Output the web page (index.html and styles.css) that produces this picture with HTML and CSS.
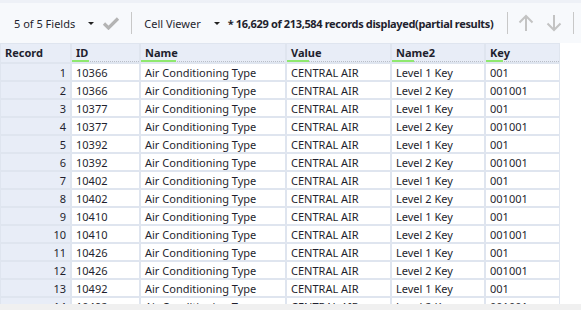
FILE: index.html
```html
<!DOCTYPE html>
<html>
<head>
<meta charset="utf-8">
<link rel="stylesheet" href="styles.css">
</head>
<body>
<div class="toolbar">
  <div class="tb-item">5 of 5 Fields<span class="caret"></span></div>
  <svg class="check" width="18" height="14" viewBox="0 0 18 14"><path d="M2 7.5 L6.5 12 L16 2.5" fill="none" stroke="#b4b4b4" stroke-width="3.2" stroke-linejoin="miter"/></svg>
  <div class="sep"></div>
  <div class="tb-item">Cell Viewer<span class="caret"></span></div>
  <div class="status">* 16,629 of 213,584 records displayed(partial results)</div>
  <div class="sep sep2"></div>
  <svg class="arrow" width="16" height="18" viewBox="0 0 16 18"><path d="M8 17 V2 M1.5 8.5 L8 2 L14.5 8.5" fill="none" stroke="#c3c3c3" stroke-width="2"/></svg>
  <svg class="arrow" width="16" height="18" viewBox="0 0 16 18"><path d="M8 1 V16 M1.5 9.5 L8 16 L14.5 9.5" fill="none" stroke="#c3c3c3" stroke-width="2"/></svg>
  <div class="sep sep3"></div>
</div>
<div class="grid">
  <div class="hd rec">Record</div>
  <div class="hd"><span class="lbl">ID</span><span class="ul" style="width:17px"></span></div>
  <div class="hd"><span class="lbl">Name</span><span class="ul" style="width:35px"></span></div>
  <div class="hd"><span class="lbl">Value</span><span class="ul" style="width:22px"></span></div>
  <div class="hd"><span class="lbl">Name2</span><span class="ul" style="width:22px"></span></div>
  <div class="hd"><span class="lbl">Key</span><span class="ul" style="width:17px"></span></div>

  <div class="num">1</div><div class="c">10366</div><div class="c">Air Conditioning Type</div><div class="c">CENTRAL AIR</div><div class="c">Level 1 Key</div><div class="c">001</div>
  <div class="num">2</div><div class="c">10366</div><div class="c">Air Conditioning Type</div><div class="c">CENTRAL AIR</div><div class="c">Level 2 Key</div><div class="c">001001</div>
  <div class="num">3</div><div class="c">10377</div><div class="c">Air Conditioning Type</div><div class="c">CENTRAL AIR</div><div class="c">Level 1 Key</div><div class="c">001</div>
  <div class="num">4</div><div class="c">10377</div><div class="c">Air Conditioning Type</div><div class="c">CENTRAL AIR</div><div class="c">Level 2 Key</div><div class="c">001001</div>
  <div class="num">5</div><div class="c">10392</div><div class="c">Air Conditioning Type</div><div class="c">CENTRAL AIR</div><div class="c">Level 1 Key</div><div class="c">001</div>
  <div class="num">6</div><div class="c">10392</div><div class="c">Air Conditioning Type</div><div class="c">CENTRAL AIR</div><div class="c">Level 2 Key</div><div class="c">001001</div>
  <div class="num">7</div><div class="c">10402</div><div class="c">Air Conditioning Type</div><div class="c">CENTRAL AIR</div><div class="c">Level 1 Key</div><div class="c">001</div>
  <div class="num">8</div><div class="c">10402</div><div class="c">Air Conditioning Type</div><div class="c">CENTRAL AIR</div><div class="c">Level 2 Key</div><div class="c">001001</div>
  <div class="num">9</div><div class="c">10410</div><div class="c">Air Conditioning Type</div><div class="c">CENTRAL AIR</div><div class="c">Level 1 Key</div><div class="c">001</div>
  <div class="num">10</div><div class="c">10410</div><div class="c">Air Conditioning Type</div><div class="c">CENTRAL AIR</div><div class="c">Level 2 Key</div><div class="c">001001</div>
  <div class="num">11</div><div class="c">10426</div><div class="c">Air Conditioning Type</div><div class="c">CENTRAL AIR</div><div class="c">Level 1 Key</div><div class="c">001</div>
  <div class="num">12</div><div class="c">10426</div><div class="c">Air Conditioning Type</div><div class="c">CENTRAL AIR</div><div class="c">Level 2 Key</div><div class="c">001001</div>
  <div class="num">13</div><div class="c">10492</div><div class="c">Air Conditioning Type</div><div class="c">CENTRAL AIR</div><div class="c">Level 1 Key</div><div class="c">001</div>
  <div class="num">14</div><div class="c">10492</div><div class="c">Air Conditioning Type</div><div class="c">CENTRAL AIR</div><div class="c">Level 2 Key</div><div class="c">001001</div>
</div>
<div class="hscroll"></div>
</body>
</html>
```

FILE: styles.css
```css
html, body {
  margin: 0;
  padding: 0;
  width: 581px;
  height: 310px;
  overflow: hidden;
  background: #ffffff;
  font-family: "Noto Sans", "Open Sans", sans-serif;
  font-size: 11px;
  color: #1f1f2e;
  position: relative;
}
.toolbar {
  height: 40px;
  margin-top: 3px;
  background: #f7f9fc;
  display: flex;
  align-items: center;
  padding-left: 14px;
  box-sizing: border-box;
  white-space: nowrap;
}
.toolbar > * { flex-shrink: 0; }
body::before {
  content: "";
  display: block;
  height: 3px;
  background: #eef1f7;
  position: absolute;
  left: 0; right: 0; top: 0;
}
.tb-item {
  display: flex;
  align-items: center;
}
.caret {
  display: inline-block;
  width: 0; height: 0;
  border-left: 3px solid transparent;
  border-right: 3px solid transparent;
  border-top: 3px solid #222;
  margin-left: 13px;
  margin-top: 1px;
}
.check { margin-left: 8px; }
.sep {
  width: 1px;
  height: 22px;
  background: #c8c8c8;
  margin: 0 12px 0 11px;
}
.status {
  font-weight: bold;
  margin-left: 8px;
  letter-spacing: -0.35px;
}
.sep2 { margin: 0 10px 0 14px; }
.arrow { margin-right: 12px; }
.sep3 { margin: 0 0 0 -1px; }
.grid {
  display: grid;
  grid-template-columns: 69px 67px 144px 103px 92px 73px;
  grid-template-rows: 18px;
  grid-auto-rows: 16px;
  gap: 2px;
  padding: 1px 0 0 1px;
  width: 560px;
  box-sizing: border-box;
  background: #dfe5ef;
}
.grid > div {
  line-height: 17px;
  white-space: nowrap;
  overflow: hidden;
}
.hd {
  background: #e8edf7;
  font-weight: bold;
  position: relative;
  padding-left: 4px;
  background-image: linear-gradient(to right, #b9bec7 50%, transparent 50%);
  background-size: 2px 1px;
  background-repeat: repeat-x;
  background-position: 0 17px;
}
.hd.rec {
  background-image: none;
}
.ul {
  position: absolute;
  left: 0;
  bottom: 0;
  height: 2px;
  background: #8fe86f;
}
.num {
  background: #e8edf7;
  text-align: right;
  padding-right: 4px;
}
.c {
  background: #ffffff;
  padding-left: 4px;
}
.hscroll {
  position: absolute;
  left: 0;
  right: 0;
  bottom: 0;
  height: 6px;
  background: #f0f0f0;
}
```
